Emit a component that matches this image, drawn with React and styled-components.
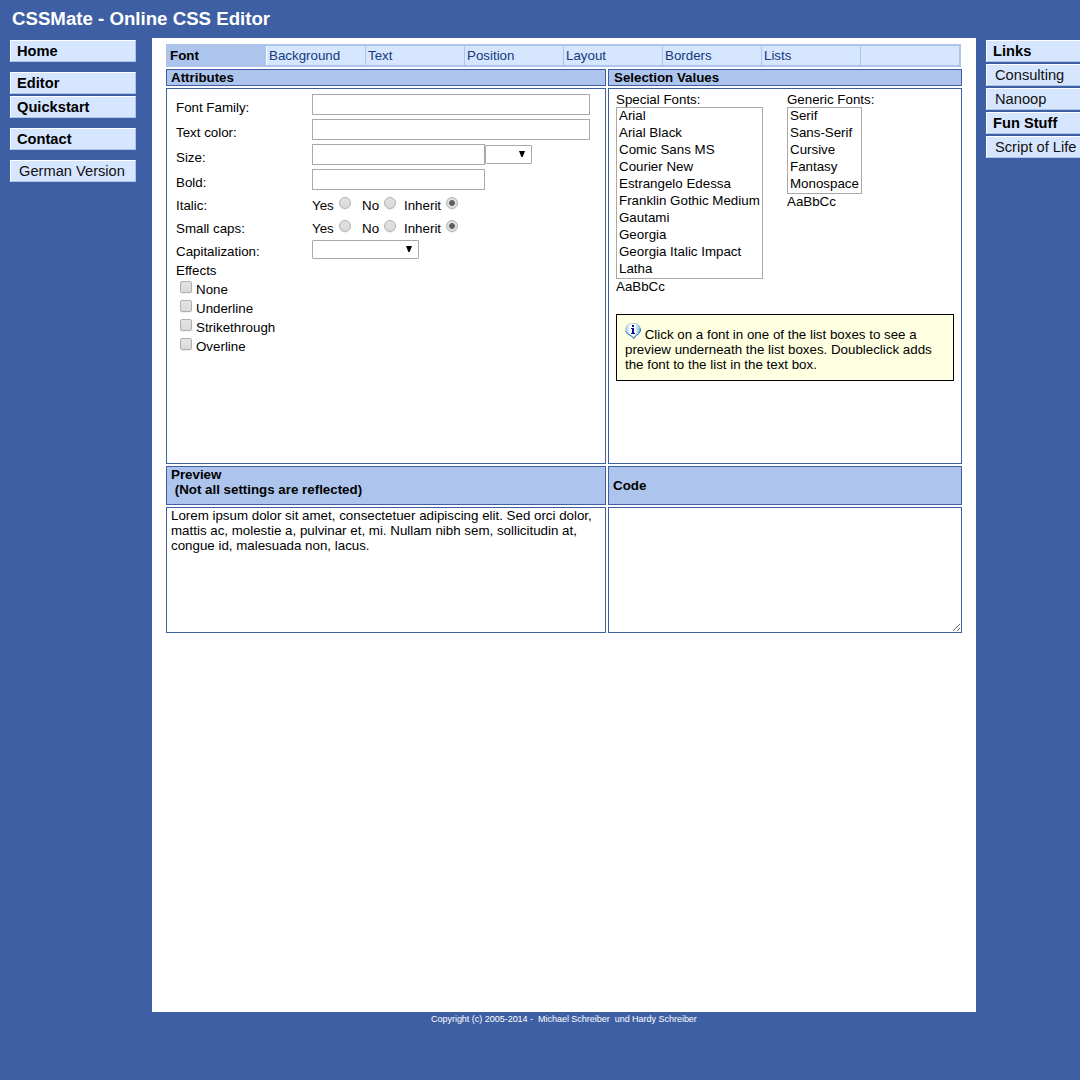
import React from "react";
import styled, { createGlobalStyle } from "styled-components";

const BLUE = "#3e5fa4";
const MID = "#adc5ed";
const LIGHT = "#d7e6ff";
const LINE = "#3e5fa4";

const GlobalStyle = createGlobalStyle`
  *, *::before, *::after { box-sizing: border-box; }
  html, body { margin: 0; padding: 0; background: ${BLUE}; overflow: hidden; }
  body { font-family: "Liberation Sans", Arial, sans-serif; font-size: 13.333px; line-height: 15px; color: #000; }
`;

const Page = styled.div`
  width: 1080px;
  height: 1080px;
  overflow: hidden;
  background: ${BLUE};
`;

const Title = styled.h1`
  margin: 0;
  height: 38px;
  padding: 8px 0 0 12px;
  font-size: 18.667px;
  line-height: 21px;
  font-weight: bold;
  color: #fff;
`;

const Columns = styled.div`
  display: grid;
  grid-template-columns: 152px 824px 104px;
`;

const Nav = styled.nav`
  display: flex;
  flex-direction: column;
  gap: ${(p) => p.$gap || 2}px;
  padding: 2px 0 0 10px;
`;

const NavGroup = styled.div`
  display: flex;
  flex-direction: column;
  gap: 2px;
`;

const NavItem = styled.a`
  display: block;
  width: 126px;
  height: 22px;
  padding-left: ${(p) => (p.$plain ? 8 : 6)}px;
  border: 1px solid;
  border-color: #fff ${MID} ${MID} #fff;
  background: ${LIGHT};
  font-size: 14.667px;
  line-height: 20px;
  font-weight: ${(p) => (p.$plain ? "normal" : "bold")};
  color: ${(p) => (p.$plain ? "#111" : "#000")};
  white-space: nowrap;
`;

const Content = styled.main`
  height: 974px;
  padding: 6px 14px 0;
  background: #fff;
`;

const Tabs = styled.div`
  display: grid;
  grid-template-columns: repeat(8, 98px);
  column-gap: 1px;
  width: 795px;
  height: 23px;
  padding: 2px;
  background: ${MID};
`;

const Tab = styled.a`
  height: 19px;
  padding-left: 2px;
  line-height: 19px;
  background: ${(p) => (p.$active ? MID : LIGHT)};
  box-shadow: ${(p) => (p.$active ? "1px 0 0 #fff" : "none")};
  color: ${(p) => (p.$active ? "#000" : "#123a7c")};
  font-weight: ${(p) => (p.$active ? "bold" : "normal")};
`;

const Panels = styled.div`
  display: grid;
  grid-template-columns: 440px 354px;
  grid-template-rows: 17px 376px 39px 126px;
  gap: 2px;
  margin-top: 2px;
`;

const Heading = styled.h2`
  display: flex;
  align-items: center;
  margin: 0;
  padding: 0 0 0 ${(p) => p.$indent || 4}px;
  border: 1px solid ${LINE};
  background: ${MID};
  font-size: 13.333px;
  font-weight: bold;
  line-height: 15px;
`;

const PreviewHeading = styled(Heading)`
  align-items: flex-start;
  white-space: pre;
`;

const Panel = styled.section`
  border: 1px solid ${LINE};
  background: #fff;
`;

const Form = styled(Panel)`
  padding: 3px 0 0 9px;
`;

const Row = styled.div`
  display: grid;
  grid-template-columns: 136px 1fr;
  height: ${(p) => (p.$short ? 23 : 25)}px;
`;

const Label = styled.label`
  padding-top: ${(p) => (p.$short ? 6 : 8)}px;
`;

const Field = styled.div`
  display: flex;
  align-items: flex-start;
  padding-top: 2px;
`;

const Input = styled.input.attrs({ type: "text" })`
  width: ${(p) => (p.$wide ? 278 : 173)}px;
  height: 21px;
  margin: 0;
  padding: 1px 2px;
  border: 1px solid #a9a9a9;
  border-radius: 0;
  background: #fff;
  outline: none;
`;

const Select = styled.div`
  display: flex;
  justify-content: flex-end;
  width: ${(p) => p.$width}px;
  height: 19px;
  margin-top: ${(p) => p.$top || 0}px;
  padding: 5px 6px 0 0;
  border: 1px solid #a9a9a9;
  border-radius: 1px;
  background: #fff;
`;

const RadioGroup = styled.div`
  display: flex;
  padding-top: 5px;
`;

const Choice = styled.label`
  display: flex;
  width: ${(p) => p.$width}px;
  margin-left: ${(p) => p.$offset || 0}px;
`;

const ChoiceText = styled.span`
  flex: 1;
  padding-top: 1px;
`;

const Radio = styled.input.attrs({ type: "radio" })`
  appearance: none;
  width: 12px;
  height: 12px;
  margin: 0;
  border: 1px solid #b0b0b0;
  border-radius: 50%;
  background: ${(p) =>
    p.defaultChecked
      ? "radial-gradient(circle at center, #5f5f5f 0 2.5px, #e0e0e0 3.3px)"
      : "linear-gradient(#e2e2e2, #d9d9d9)"};
  box-shadow: 0 1px 0 rgba(0, 0, 0, 0.06);
`;

const Effects = styled.div`
  padding-top: 2px;
`;

const CheckList = styled.div`
  padding-top: 2px;
`;

const CheckRow = styled.label`
  display: flex;
  gap: 4px;
  height: 19px;
  padding-left: 4px;
`;

const CheckText = styled.span`
  padding-top: 2px;
`;

const Checkbox = styled.input.attrs({ type: "checkbox" })`
  appearance: none;
  width: 12px;
  height: 12px;
  margin: 1px 0 0;
  border: 1px solid #b0b0b0;
  border-radius: 2px;
  background: linear-gradient(#e4e4e4, #dadada);
  box-shadow: 0 1px 0 rgba(0, 0, 0, 0.06);
`;

const Selection = styled(Panel)`
  padding: 3px 7px 0;
`;

const Lists = styled.div`
  display: grid;
  grid-template-columns: 171px 1fr;
  align-items: start;
`;

const ListBox = styled.ul`
  width: ${(p) => p.$width}px;
  margin: 0;
  padding: 0 0 0 2px;
  border: 1px solid #a9a9a9;
  list-style: none;
  white-space: nowrap;
`;

const Option = styled.li`
  height: 17px;
  line-height: 15px;
`;

const Hint = styled.div`
  width: 338px;
  height: 67px;
  margin-top: 20px;
  padding: 8px;
  border: 1px solid #000;
  background: #ffffe1;
`;

const HintIcon = styled.svg`
  width: 16px;
  height: 16px;
  vertical-align: baseline;
`;

const Preview = styled(Panel)`
  padding: 0 4px;
`;

const Code = styled.textarea`
  display: block;
  width: 354px;
  height: 126px;
  margin: 0;
  padding: 2px;
  border: 1px solid ${LINE};
  background: #fff;
  outline: none;
`;

const Footer = styled.footer`
  padding: 2px 0 0 431px;
  color: #fff;
  font-size: 9px;
  line-height: 11px;
  letter-spacing: -0.02px;
  white-space: pre;
`;

const Arrow = () => (
  <svg width="6" height="6" viewBox="0 0 6 6">
    <path d="M0 0H6L3.6 6H2.4Z" fill="#000" />
  </svg>
);

const InfoIcon = () => (
  <HintIcon viewBox="0 0 16 16">
    <defs>
      <linearGradient id="bubble" x1="0" y1="0" x2="1" y2="0">
        <stop offset="0" stopColor="#9cc8ee" />
        <stop offset="0.3" stopColor="#ffffff" />
        <stop offset="0.65" stopColor="#f6fbff" />
        <stop offset="1" stopColor="#6caee2" />
      </linearGradient>
    </defs>
    <path
      d="M5 .6H11L14.2 2.6L15.4 5.5V8L13.6 10.8L10.5 12.8L9.2 15.3L6 12.8L2.5 10.8L.6 8V5.5L2 2.6Z"
      fill="url(#bubble)"
      stroke="#a3bccd"
      strokeWidth=".8"
    />
    <path d="M15.4 5.5V8L13.6 10.8L10.5 12.8L9.2 15.3L6 12.8L2.5 10.8L.8 8.3" fill="none" stroke="#2a74b4" strokeWidth="1" />
    <path d="M7 2H9V4H7ZM6 5H9V10H10V11H6V10H7V6H6Z" fill="#10109c" />
  </HintIcon>
);

const TABS = ["Font", "Background", "Text", "Position", "Layout", "Borders", "Lists", ""];
const SPECIAL = [
  "Arial", "Arial Black", "Comic Sans MS", "Courier New", "Estrangelo Edessa",
  "Franklin Gothic Medium", "Gautami", "Georgia", "Georgia Italic Impact", "Latha",
];
const GENERIC = ["Serif", "Sans-Serif", "Cursive", "Fantasy", "Monospace"];
const EFFECTS = ["None", "Underline", "Strikethrough", "Overline"];

const Radios = ({ name }) => (
  <RadioGroup>
    <Choice $width={39}><ChoiceText>Yes</ChoiceText><Radio name={name} /></Choice>
    <Choice $width={34} $offset={11}><ChoiceText>No</ChoiceText><Radio name={name} /></Choice>
    <Choice $width={54} $offset={8}><ChoiceText>Inherit</ChoiceText><Radio name={name} defaultChecked /></Choice>
  </RadioGroup>
);

export default function App() {
  return (
    <Page>
      <GlobalStyle />
      <Title>CSSMate - Online CSS Editor</Title>
      <Columns>
        <Nav $gap={10}>
          <NavItem>Home</NavItem>
          <NavGroup>
            <NavItem>Editor</NavItem>
            <NavItem>Quickstart</NavItem>
          </NavGroup>
          <NavItem>Contact</NavItem>
          <NavItem $plain>German Version</NavItem>
        </Nav>
        <Content>
          <Tabs>
            {TABS.map((t, i) => <Tab key={i} $active={i === 0}>{t}</Tab>)}
          </Tabs>
          <Panels>
            <Heading>Attributes</Heading>
            <Heading $indent={5}>Selection Values</Heading>
            <Form>
              <Row><Label>Font Family:</Label><Field><Input $wide /></Field></Row>
              <Row><Label>Text color:</Label><Field><Input $wide /></Field></Row>
              <Row>
                <Label>Size:</Label>
                <Field><Input /><Select $width={47} $top={1}><Arrow /></Select></Field>
              </Row>
              <Row><Label>Bold:</Label><Field><Input /></Field></Row>
              <Row $short><Label $short>Italic:</Label><Radios name="italic" /></Row>
              <Row $short><Label $short>Small caps:</Label><Radios name="caps" /></Row>
              <Row $short>
                <Label $short>Capitalization:</Label>
                <Field><Select $width={107}><Arrow /></Select></Field>
              </Row>
              <Effects>
                Effects
                <CheckList>
                  {EFFECTS.map((e) => (
                    <CheckRow key={e}><Checkbox /><CheckText>{e}</CheckText></CheckRow>
                  ))}
                </CheckList>
              </Effects>
            </Form>
            <Selection>
              <Lists>
                <div>
                  Special Fonts:
                  <ListBox $width={147}>{SPECIAL.map((f) => <Option key={f}>{f}</Option>)}</ListBox>
                  AaBbCc
                </div>
                <div>
                  Generic Fonts:
                  <ListBox $width={75}>{GENERIC.map((f) => <Option key={f}>{f}</Option>)}</ListBox>
                  AaBbCc
                </div>
              </Lists>
              <Hint>
                <InfoIcon /> Click on a font in one of the list boxes to see a preview underneath
                the list boxes. Doubleclick adds the font to the list in the text box.
              </Hint>
            </Selection>
            <PreviewHeading>{"Preview\n (Not all settings are reflected)"}</PreviewHeading>
            <Heading>Code</Heading>
            <Preview>
              Lorem ipsum dolor sit amet, consectetuer adipiscing elit. Sed orci dolor, mattis ac,
              molestie a, pulvinar et, mi. Nullam nibh sem, sollicitudin at, congue id, malesuada
              non, lacus.
            </Preview>
            <Code />
          </Panels>
        </Content>
        <Nav>
          <NavItem>Links</NavItem>
          <NavItem $plain>Consulting</NavItem>
          <NavItem $plain>Nanoop</NavItem>
          <NavItem>Fun Stuff</NavItem>
          <NavItem $plain>Script of Life</NavItem>
        </Nav>
      </Columns>
      <Footer>{"Copyright (c) 2005-2014 -  Michael Schreiber  und Hardy Schreiber"}</Footer>
    </Page>
  );
}
